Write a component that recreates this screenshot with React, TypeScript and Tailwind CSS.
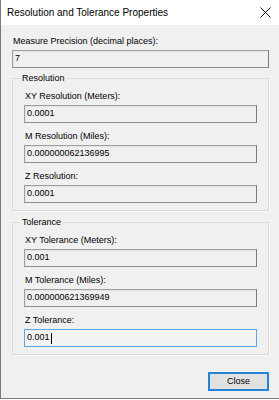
import React from "react";

const ui = "font-['Liberation_Sans',Arial,sans-serif]";

function Field(props: { label: string; value: string; focused?: boolean; first?: boolean }) {
  const { label, value, focused, first } = props;
  return (
    <div className={first ? "flex flex-col" : "flex flex-col mt-[7px]"}>
      <div className="h-[13px] leading-[13px] text-[9px] text-[#000] pl-[1px]">{label}</div>
      <div
        className={
          focused
            ? "mt-[2px] h-[18px] border border-[#5aa6e6] bg-[#f3f3f3] flex items-center pl-[2px] text-[9px]"
            : "mt-[2px] h-[18px] border border-[#a0a0a0] border-r-[#7c7c7c] border-b-[#8c8c8c] shadow-[inset_1px_1px_0_#e3e3e3] bg-[#f0f0f0] flex items-center pl-[2px] text-[9px]"
        }
      >
        <span>{value}</span>
        {focused && <span className="inline-block w-px h-[11px] bg-black ml-[1px]" />}
      </div>
    </div>
  );
}

function Group(props: { title: string; className?: string; children: React.ReactNode }) {
  return (
    <fieldset
      className={
        "border border-[#dcdcdc] shadow-[1px_1px_0_#fafafa] px-[11px] pb-[7px] " +
        (props.className ?? "")
      }
    >
      <legend className="ml-[-4px] px-[2px] text-[9px] leading-[13px]">{props.title}</legend>
      <div className="flex flex-col mt-[5px]">{props.children}</div>
    </fieldset>
  );
}

export default function App() {
  return (
    <div className={`${ui} w-[279px] h-[400px] bg-white flex flex-col`}>
      <div className="h-[399px] border-l border-b border-[#7a7a7a] flex flex-col">
        <div className="h-[25px] bg-white flex items-center justify-between pl-[6px] pr-[8px]">
          <span className="text-[10px] text-[#000]">Resolution and Tolerance Properties</span>
          <svg width="11" height="11" viewBox="0 0 11 11" className="text-[#111]">
            <path d="M0.5 0.5 L10.5 10.5 M10.5 0.5 L0.5 10.5" stroke="currentColor" strokeWidth="1" />
          </svg>
        </div>
        <div className="flex-1 bg-[#f0f0f0] flex flex-col pl-[11px] pr-[10px] pt-[10px]">
          <Field first label="Measure Precision (decimal places):" value="7" />
          <Group title="Resolution" className="mt-[4px]">
            <Field first label="XY Resolution (Meters):" value="0.0001" />
            <Field label="M Resolution (Miles):" value="0.000000062136995" />
            <Field label="Z Resolution:" value="0.0001" />
          </Group>
          <Group title="Tolerance" className="mt-[5px]">
            <Field first label="XY Tolerance (Meters):" value="0.001" />
            <Field label="M Tolerance (Miles):" value="0.000000621369949" />
            <Field label="Z Tolerance:" value="0.001" focused />
          </Group>
          <div className="flex justify-end mt-[17px]">
            <button className="w-[61px] h-[19px] border-2 border-[#2684d8] bg-[#e1e1e1] text-[9px] text-black">
              Close
            </button>
          </div>
        </div>
      </div>
    </div>
  );
}
